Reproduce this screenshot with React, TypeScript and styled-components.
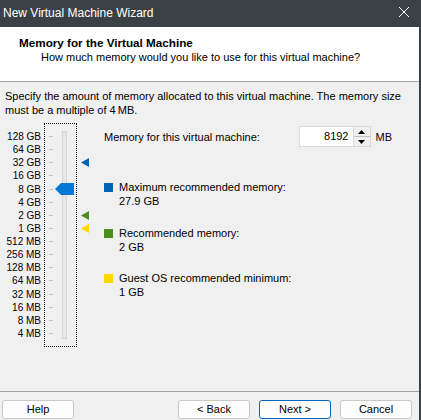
import React from "react";
import styled, { createGlobalStyle } from "styled-components";

const GlobalStyle = createGlobalStyle`
	html, body {
		margin: 0;
		padding: 0;
		background: #f0f0f0;
	}
	body {
		font-family: "Liberation Sans", Arial, sans-serif;
		font-size: 11px;
		color: #000;
	}
`;

const ROW = 13.13;
const labels = [
	"128 GB", "64 GB", "32 GB", "16 GB", "8 GB", "4 GB", "2 GB", "1 GB",
	"512 MB", "256 MB", "128 MB", "64 MB", "32 MB", "16 MB", "8 MB", "4 MB",
];

const markers = [
	{ row: 2, color: "#0063b1" },
	{ row: 6, color: "#4a8f1c" },
	{ row: 7, color: "#ffd800" },
];

const legend = [
	{ color: "#0063b1", title: "Maximum recommended memory:", value: "27.9 GB" },
	{ color: "#4a8f1c", title: "Recommended memory:", value: "2 GB" },
	{ color: "#ffd800", title: "Guest OS recommended minimum:", value: "1 GB" },
];

const App = () => {
	return (
		<Window>
			<GlobalStyle />
			<TitleBar>
				<TitleText>New Virtual Machine Wizard</TitleText>
				<CloseIcon width="12" height="12" viewBox="0 0 12 12">
					<path d="M1 1 L11 11 M11 1 L1 11" stroke="#fff" strokeWidth="1" />
				</CloseIcon>
			</TitleBar>
			<Body>
				<Header>
					<HeaderTitle>Memory for the Virtual Machine</HeaderTitle>
					<HeaderSub>How much memory would you like to use for this virtual machine?</HeaderSub>
				</Header>
				<Content>
					<Description>
						Specify the amount of memory allocated to this virtual machine. The memory size
						must be a multiple of 4&#8201;MB.
					</Description>
					<Main>
						<SliderArea>
							<Labels>
								{labels.map((l) => <Label key={l}>{l}</Label>)}
							</Labels>
							<SliderBox>
								<Ticks>
									{labels.map((l) => <Tick key={l}><TickMark /></Tick>)}
								</Ticks>
								<Track />
								<Thumb style={{ top: 4 * ROW + 6 }} viewBox="0 0 19 12" width="19" height="12">
									<path d="M0 6 L6 0 H19 V12 H6 Z" fill="#0078d7" />
								</Thumb>
							</SliderBox>
							<Markers>
								{markers.map((m) => (
									<Marker key={m.row} style={{ top: m.row * ROW }} viewBox="0 0 8 9" width="8" height="9">
										<path d="M0 4.5 L8 0 V9 Z" fill={m.color} />
									</Marker>
								))}
							</Markers>
						</SliderArea>
						<RightPanel>
							<MemoryRow>
								<span>Memory for this virtual machine:</span>
								<SpinGroup>
									<SpinBox>
										<SpinValue>8192</SpinValue>
										<SpinButtons>
											<SpinButton>
												<svg width="7" height="4" viewBox="0 0 7 4"><path d="M0 4 L3.5 0 L7 4 Z" fill="#000" /></svg>
											</SpinButton>
											<SpinButton>
												<svg width="7" height="4" viewBox="0 0 7 4"><path d="M0 0 L3.5 4 L7 0 Z" fill="#000" /></svg>
											</SpinButton>
										</SpinButtons>
									</SpinBox>
									<span>MB</span>
								</SpinGroup>
							</MemoryRow>
							<Legend>
								{legend.map((item) => (
									<LegendItem key={item.title}>
										<Swatch $color={item.color} />
										<div>
											<div>{item.title}</div>
											<div>{item.value}</div>
										</div>
									</LegendItem>
								))}
							</Legend>
						</RightPanel>
					</Main>
				</Content>
				<Footer>
					<Button>Help</Button>
					<Spacer />
					<Button>&lt; Back</Button>
					<Button $primary>Next &gt;</Button>
					<Button>Cancel</Button>
				</Footer>
			</Body>
		</Window>
	);
};

const Window = styled.div`
	width: 421px;
	height: 420px;
	display: flex;
	flex-direction: column;
	overflow: hidden;
	background: #f0f0f0;
`;

const TitleBar = styled.div`
	height: 27px;
	flex: none;
	background: #3a4144;
	display: flex;
	align-items: center;
	justify-content: space-between;
	padding: 0 11px 1px 3px;
	box-sizing: border-box;
`;

const TitleText = styled.div`
	color: #fff;
	font-size: 12px;
`;

const CloseIcon = styled.svg`
	display: block;
	margin-bottom: 2px;
`;

const Body = styled.div`
	flex: 1;
	display: flex;
	flex-direction: column;
	border-right: 2px solid #3a4144;
`;

const Header = styled.div`
	flex: none;
	height: 55px;
	box-sizing: border-box;
	background: #fff;
	border-bottom: 1px solid #a0a0a0;
	padding: 8px 0 0 19px;
`;

const HeaderTitle = styled.div`
	font-weight: bold;
	font-size: 11.7px;
	line-height: 15px;
`;

const HeaderSub = styled.div`
	margin-left: 22px;
	line-height: 15px;
`;

const Content = styled.div`
	flex: 1;
	padding: 7px 0 0 5px;
`;

const Description = styled.div`
	line-height: 14px;
	width: 412px;
`;

const Main = styled.div`
	display: flex;
	margin-top: 6px;
	margin-left: -5px;
`;

const SliderArea = styled.div`
	display: flex;
	align-items: flex-start;
	width: 104px;
	flex: none;
`;

const Labels = styled.div`
	width: 41px;
	margin-top: 7px;
	display: grid;
	grid-template-rows: repeat(16, ${ROW}px);
	font-size: 10px;
`;

const Label = styled.div`
	text-align: right;
	line-height: ${ROW}px;
	white-space: nowrap;
`;

const SliderBox = styled.div`
	position: relative;
	margin-left: 3px;
	width: 31px;
	height: 222px;
	border: 1px dotted #000;
`;

const Ticks = styled.div`
	position: absolute;
	left: 4px;
	top: 6px;
	display: grid;
	grid-template-rows: repeat(16, ${ROW}px);
`;

const Tick = styled.div`
	display: flex;
	align-items: center;
`;

const TickMark = styled.div`
	width: 4px;
	height: 1px;
	background: #c6c6c6;
`;

const Track = styled.div`
	position: absolute;
	left: 17px;
	top: 7px;
	width: 3px;
	height: 206px;
	background: #e7e7e7;
	border: 1px solid #d6d6d6;
`;

const Thumb = styled.svg`
	position: absolute;
	left: 10px;
	display: block;
`;

const Markers = styled.div`
	position: relative;
	margin-left: 4px;
	margin-top: 9px;
	width: 8px;
	height: 220px;
`;

const Marker = styled.svg`
	position: absolute;
	left: 0;
	display: block;
`;

const RightPanel = styled.div`
	flex: 1;
	padding-top: 3px;
`;

const MemoryRow = styled.div`
	display: flex;
	align-items: center;
	justify-content: space-between;
	padding-right: 27px;
`;

const SpinGroup = styled.div`
	display: flex;
	align-items: center;
	gap: 5px;
`;

const SpinBox = styled.div`
	display: flex;
	width: 72px;
	height: 21px;
	box-sizing: border-box;
	border: 1px solid #d9d9d9;
	background: #fff;
`;

const SpinValue = styled.div`
	flex: 1;
	text-align: right;
	padding-right: 4px;
	line-height: 19px;
`;

const SpinButtons = styled.div`
	width: 16px;
	display: flex;
	flex-direction: column;
	border-left: 1px solid #d9d9d9;
	background: #f0f0f0;
`;

const SpinButton = styled.div`
	flex: 1;
	display: flex;
	align-items: center;
	justify-content: center;
	& + & {
		border-top: 1px solid #c0c0c0;
	}
`;

const Legend = styled.div`
	margin-top: 33px;
	display: flex;
	flex-direction: column;
	gap: 17.5px;
`;

const LegendItem = styled.div`
	display: flex;
	gap: 6px;
	line-height: 14px;
`;

const Swatch = styled.div<{ $color: string }>`
	width: 9px;
	height: 9px;
	margin-top: 3px;
	background: ${(p) => p.$color};
`;

const Footer = styled.div`
	height: 29px;
	flex: none;
	border-top: 1px solid #a0a0a0;
	display: flex;
	align-items: flex-start;
	padding: 8px 7px 0 2px;
	gap: 9px;
	box-sizing: border-box;
`;

const Spacer = styled.div`
	flex: 1;
`;

const Button = styled.div<{ $primary?: boolean }>`
	width: 72px;
	height: 19px;
	box-sizing: border-box;
	border: 1px solid ${(p) => (p.$primary ? "#0067c0" : "#c9c9c9")};
	border-radius: 3px;
	background: #fdfdfd;
	text-align: center;
	line-height: 17px;
`;

export default App;
